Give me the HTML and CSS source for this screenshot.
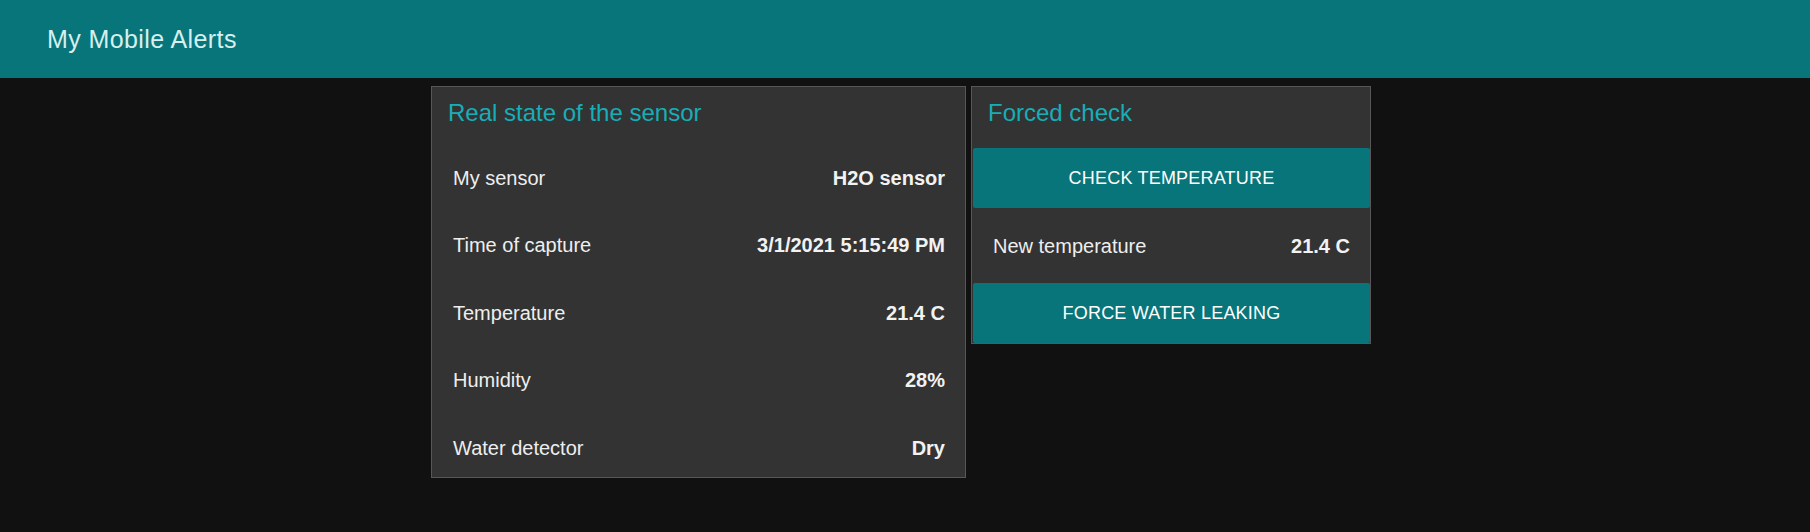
FILE: index.html
```html
<!DOCTYPE html>
<html lang="en">
<head>
<meta charset="utf-8">
<title>My Mobile Alerts</title>
<link rel="stylesheet" href="styles.css">
</head>
<body>
<header class="topbar">
  <span class="brand">My Mobile Alerts</span>
</header>
<main class="content">
  <section class="card card-state">
    <h2 class="card-title">Real state of the sensor</h2>
    <div class="rows">
      <div class="row"><span class="label">My sensor</span><span class="value">H2O sensor</span></div>
      <div class="row"><span class="label">Time of capture</span><span class="value">3/1/2021 5:15:49 PM</span></div>
      <div class="row"><span class="label">Temperature</span><span class="value">21.4 C</span></div>
      <div class="row"><span class="label">Humidity</span><span class="value">28%</span></div>
      <div class="row"><span class="label">Water detector</span><span class="value">Dry</span></div>
    </div>
  </section>
  <section class="card card-check">
    <h2 class="card-title">Forced check</h2>
    <button class="action action-first" type="button">Check temperature</button>
    <div class="row row-result"><span class="label">New temperature</span><span class="value">21.4 C</span></div>
    <button class="action" type="button">Force water leaking</button>
  </section>
</main>
</body>
</html>
```
FILE: styles.css
```css
html, body {
  margin: 0;
  padding: 0;
}

body {
  background: #111111;
  color: #eeeeee;
  font-family: "Liberation Sans", Arial, sans-serif;
}

.topbar {
  height: 78px;
  background: #08757a;
  display: flex;
  align-items: center;
  padding-left: 47px;
  box-sizing: border-box;
}

.brand {
  font-size: 25px;
  letter-spacing: 0.4px;
  color: #d6efef;
  line-height: 30px;
}

.content {
  display: flex;
  justify-content: center;
  align-items: flex-start;
  gap: 5px;
  padding: 8px 8px 0 0;
}

.card {
  background: #333333;
  border: 1px solid #575757;
  box-sizing: border-box;
}

.card-state {
  width: 535px;
}

.card-check {
  width: 400px;
}

.card-title {
  margin: 0;
  padding: 12px 17px 0 16px;
  font-size: 24px;
  line-height: 28px;
  font-weight: normal;
  color: #17aeb8;
}

.rows {
  display: flex;
  flex-direction: column;
  gap: 43.5px;
  padding: 38.5px 20px 17.5px 21px;
}

.row {
  display: flex;
  justify-content: space-between;
  align-items: center;
  font-size: 20px;
  line-height: 24px;
}

.label {
  color: #eeeeee;
}

.value {
  font-weight: bold;
  color: #f2f2f2;
}

.row-result {
  height: 75px;
  padding: 0 20px 0 21px;
}

.action {
  display: block;
  width: calc(100% - 1px);
  margin: 0 0 0 1px;
  height: 60px;
  background: #08757a;
  color: #ffffff;
  border: none;
  border-radius: 2px;
  font-family: "Liberation Sans", Arial, sans-serif;
  font-size: 18px;
  letter-spacing: 0.2px;
  text-transform: uppercase;
  padding: 0;
  cursor: pointer;
}

.action-first {
  margin-top: 21px;
}
```
